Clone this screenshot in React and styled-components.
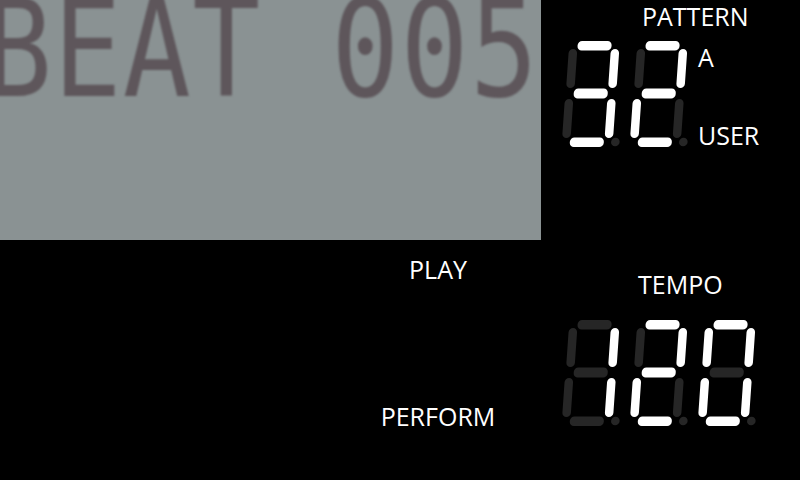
import React from "react";
import styled, { createGlobalStyle } from "styled-components";

const GlobalStyle = createGlobalStyle`
  html, body {
    margin: 0;
    padding: 0;
    background: #000;
  }
  body {
    font-family: "Open Sans", "Noto Sans", sans-serif;
  }
`;

const Screen = styled.div`
  width: 800px;
  height: 480px;
  background: #000;
  display: grid;
  grid-template-columns: 541px 259px;
  grid-template-rows: 240px 240px;
  overflow: hidden;
`;

const Lcd = styled.div`
  background: #8a9293;
  overflow: hidden;
`;

// big dot-matrix readout, cropped by the panel top like the real LCD
const LcdText = styled.div`
  font-family: "DejaVu Sans Mono", "Liberation Mono", monospace;
  font-size: 113px;
  line-height: 1;
  letter-spacing: 1.4px;
  color: #5e565b;
  white-space: pre;
  margin: -18px 0 0 -16px;
  transform: scaleY(1.2);
  transform-origin: 0 0;
  filter: blur(0.8px);
`;

const Label = styled.div`
  color: #fff;
  font-size: 25px;
  line-height: 25px;
  white-space: nowrap;
`;

const Controls = styled.div`
  width: 150px;
  margin-left: 363px;
  display: flex;
  flex-direction: column;
  align-items: center;
  justify-content: space-between;
  padding: 17px 0 51px;
`;

const Panel = styled.div`
  display: flex;
  flex-direction: column;
  padding: ${(p) => p.$top}px 0 0 20px;
`;

const Title = styled(Label)`
  padding-left: ${(p) => p.$indent}px;
`;

const DigitRow = styled.div`
  display: flex;
  margin-top: ${(p) => p.$gap}px;
`;

const Side = styled.div`
  display: flex;
  flex-direction: column;
  justify-content: space-between;
  margin-left: 1px;
  padding-top: 5px;
`;

const DigitSvg = styled.svg`
  display: block;
  flex: none;
`;

const LIT = "#ffffff";
const DIM = "#262626";

const SEGMENTS = {
  a: { x: 9.5, y: 0, w: 34, h: 9.5 },
  b: { x: 43, y: 8, w: 8.5, h: 39 },
  c: { x: 43, y: 58, w: 8.5, h: 39 },
  d: { x: 8.5, y: 96.5, w: 34, h: 9.5 },
  e: { x: 0.5, y: 58, w: 8.5, h: 39 },
  f: { x: 1, y: 8, w: 8.5, h: 39 },
  g: { x: 9, y: 47.5, w: 34, h: 10 },
};

const DIGITS = {
  0: "abcdef",
  1: "bc",
  2: "abdeg",
  3: "abcdg",
  4: "bcfg",
  5: "acdfg",
  6: "acdefg",
  7: "abc",
  8: "abcdefg",
  9: "abcdfg",
};

const Digit = ({ value }) => {
  const on = DIGITS[value] || "";
  return (
    <DigitSvg width="68" height="108" viewBox="0 0 68 108">
      <g transform="translate(7.4 1) skewX(-4)">
        {Object.entries(SEGMENTS).map(([k, s]) => (
          <rect
            key={k}
            x={s.x}
            y={s.y}
            width={s.w}
            height={s.h}
            rx="4.3"
            fill={on.includes(k) ? LIT : DIM}
          />
        ))}
        <circle cx="54" cy="101" r="4.3" fill={DIM} />
      </g>
    </DigitSvg>
  );
};

const Display = ({ value }) => (
  <>
    {value.split("").map((d, i) => (
      <Digit key={i} value={d} />
    ))}
  </>
);

export default function App() {
  return (
    <>
      <GlobalStyle />
      <Screen>
        <Lcd>
          <LcdText>BEAT 005</LcdText>
        </Lcd>

        <Panel $top={4}>
          <Title $indent={81}>PATTERN</Title>
          <DigitRow $gap={11}>
            <Display value="32" />
            <Side>
              <Label>A</Label>
              <Label>USER</Label>
            </Side>
          </DigitRow>
        </Panel>

        <Controls>
          <Label>PLAY</Label>
          <Label>PERFORM</Label>
        </Controls>

        <Panel $top={32}>
          <Title $indent={77}>TEMPO</Title>
          <DigitRow $gap={22}>
            <Display value="120" />
          </DigitRow>
        </Panel>
      </Screen>
    </>
  );
}
